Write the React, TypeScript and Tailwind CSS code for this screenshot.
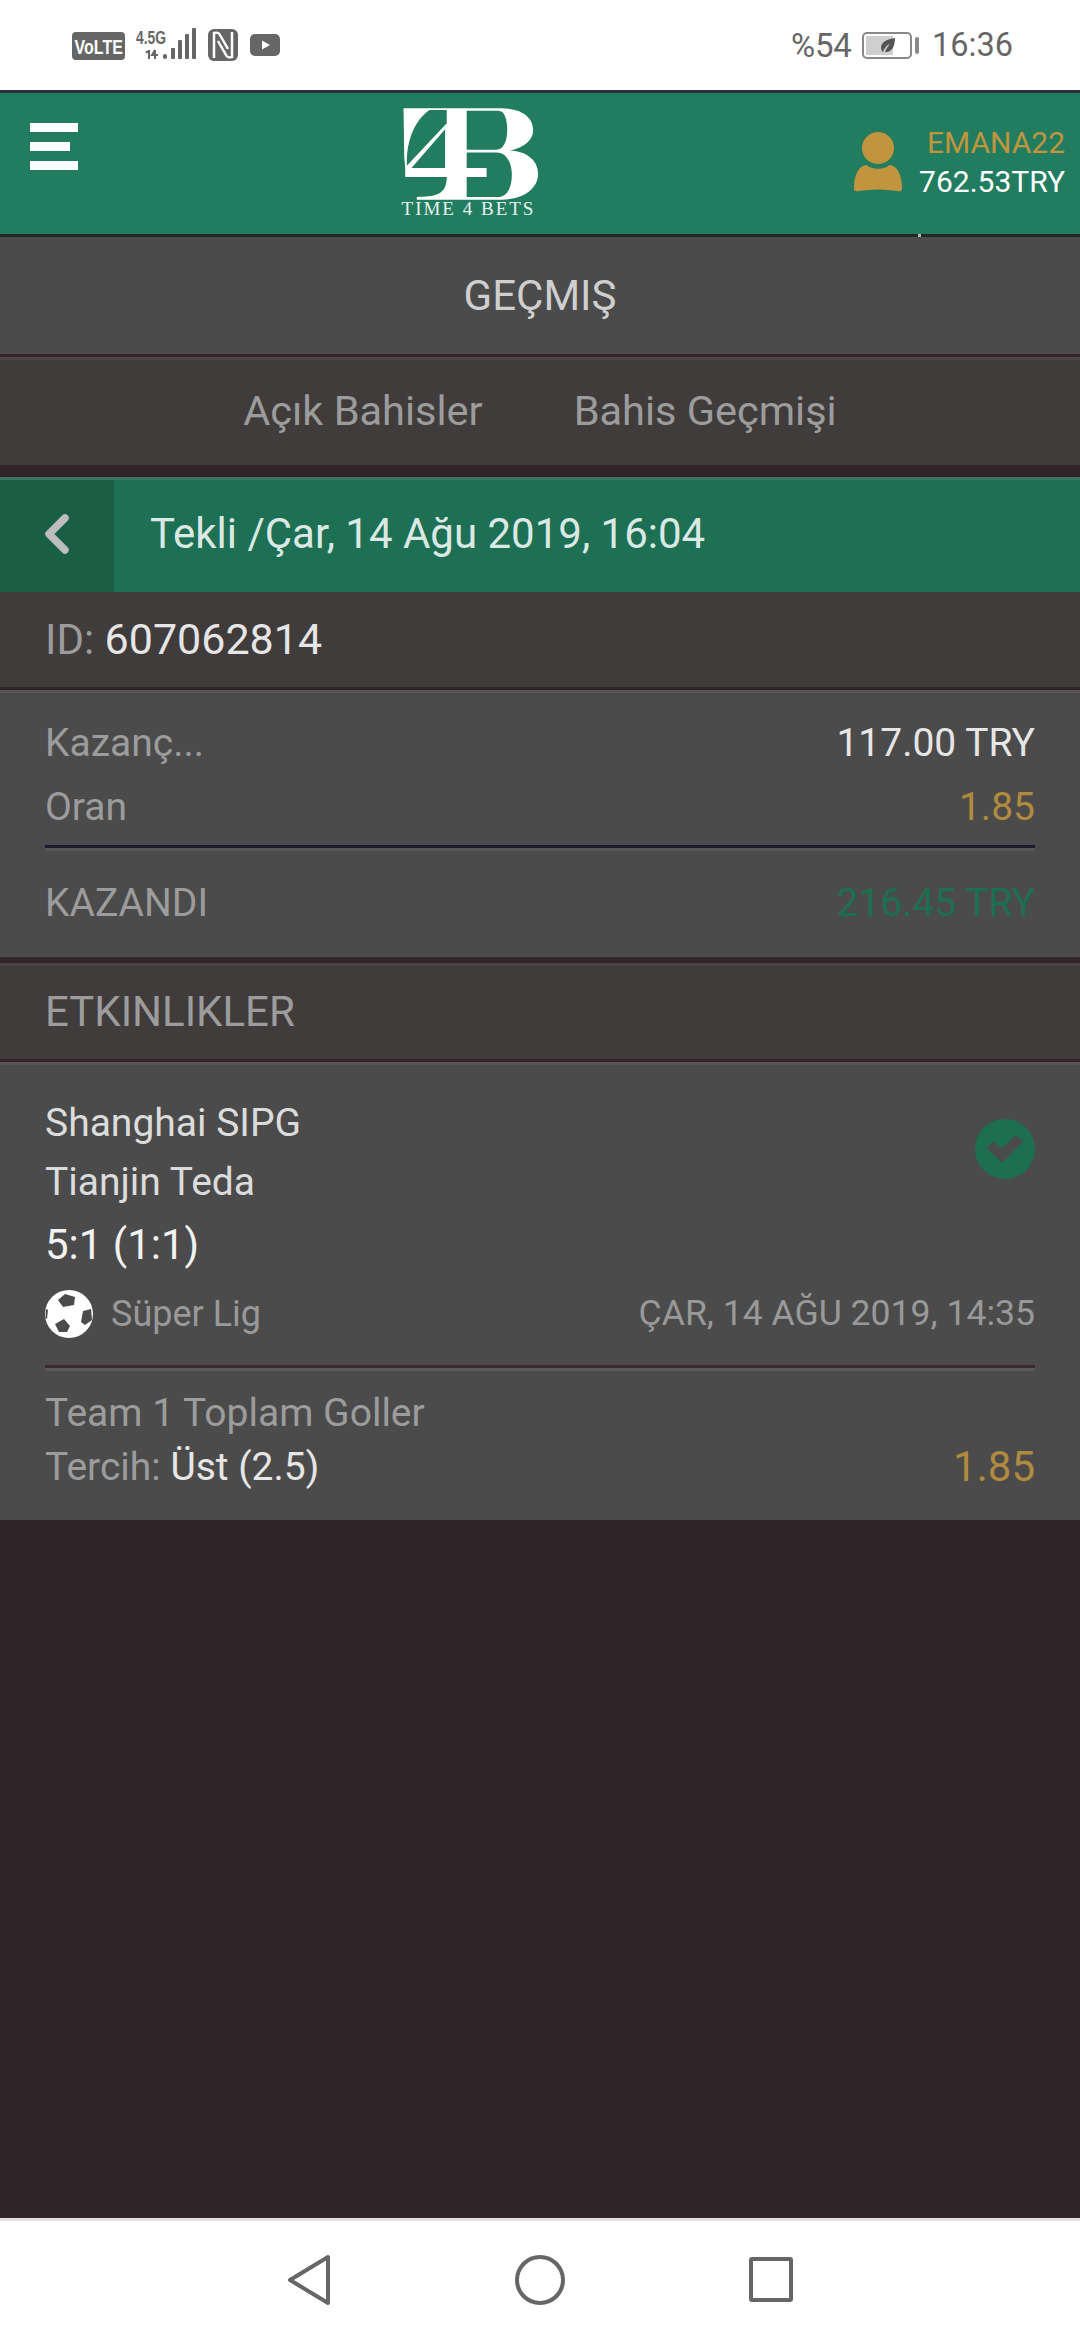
import { ChevronLeft } from "lucide-react";

function StatusBar() {
  return (
    <div className="h-[90px] bg-white flex items-center text-[#666666]">
      <div className="ml-[72px] mt-[2px] w-[53px] h-[28px] rounded-[4px] bg-[#666666] flex items-center justify-center">
        <span className="shrink-0 scale-x-[0.76] text-[21px] leading-none font-bold text-white font-['Liberation_Sans',sans-serif]">VoLTE</span>
      </div>
      <svg className="ml-[11px]" width="60" height="34" viewBox="0 0 60 34">
        <text x="0" y="16" fontSize="19" fontWeight="700" fill="#666666" fontFamily="Liberation Sans, sans-serif" textLength="30" lengthAdjust="spacingAndGlyphs">4.5G</text>
        <path d="M13 22v9M12 23l-2 2M19 22v9M19 22l-3 5h6" stroke="#666666" strokeWidth="2" fill="none" />
        <rect x="27" y="26" width="4" height="5" rx="2" fill="#666666" />
        <rect x="35" y="20" width="4" height="11" rx="1" fill="#666666" />
        <rect x="42" y="12" width="4" height="19" rx="1" fill="#666666" />
        <rect x="49" y="6" width="4" height="25" rx="1" fill="#666666" />
        <rect x="56" y="0" width="4" height="31" rx="1" fill="#666666" />
      </svg>
      <svg className="ml-[12px]" width="30" height="32" viewBox="0 0 30 32">
        <rect x="0" y="0" width="30" height="32" rx="6" fill="#666666" />
        <path d="M6 29V4c4-1 5 0 6 2l8 14" stroke="#ffffff" strokeWidth="2.5" fill="none" />
        <path d="M24 3v25c-4 1-5 0-6-2l-8-14" stroke="#ffffff" strokeWidth="2.5" fill="none" />
      </svg>
      <svg className="ml-[12px]" width="30" height="22" viewBox="0 0 30 22">
        <rect width="30" height="22" rx="5" fill="#666666" />
        <path d="M12 6.5l8 4.5-8 4.5z" fill="#ffffff" />
      </svg>
      <span className="ml-auto text-[33px] leading-none font-['Roboto',sans-serif] w-[61px] tracking-[-0.3px] whitespace-nowrap">%54</span>
      <div className="ml-[10px] w-[50px] h-[27px] border-2 border-[#888888] rounded-[5px] p-[2px] relative">
        <div className="h-full w-[27px] bg-[#cfcfcf]" />
        <svg className="absolute left-[16px] top-[3px]" width="16" height="17" viewBox="0 0 16 17">
          <path d="M15 1C7 2 1 5 1 11c0 2 1 3 2 4 1-4 4-7 7-8-2 2-4 5-5 8 6 1 10-5 10-14z" fill="#555555" />
        </svg>
      </div>
      <div className="ml-[3px] w-[4px] h-[17px] rounded-[2px] bg-[#888888]" />
      <span className="ml-[13px] mr-[67px] text-[32.5px] leading-none font-['Roboto',sans-serif]">16:36</span>
    </div>
  );
}

function Logo() {
  return (
    <div className="ml-[312px] flex flex-col items-center">
      <svg width="160" height="103" viewBox="0 0 480 310">
        <path
          d="M40 25H335C400 25 430 55 430 90C430 125 395 145 360 152C415 155 445 185 445 222C445 270 395 300 335 300H80V292C130 290 170 290 170 232H45V205L42 170Z"
          fill="#ffffff"
        />
        <path d="M118 30H170V70L50 198C47 120 75 60 118 30Z" fill="#227d60" />
        <path d="M165 88V205H64Z" fill="#227d60" />
        <path d="M230 32H325C345 32 352 60 352 90C352 125 340 148 320 150H230Z" fill="#227d60" />
        <path d="M230 158H320C350 158 366 190 366 225C366 265 350 292 325 292H230V232H290V205H230Z" fill="#227d60" />
      </svg>
      <span className="mt-[-3px] mr-[3px] text-[19px] leading-[18px] text-[#e8f1ee] tracking-[2px] font-['Liberation_Serif',serif] whitespace-nowrap">
        TIME 4 BETS
      </span>
    </div>
  );
}

function Header() {
  return (
    <div className="h-[147px] bg-[#227d60] border-t-[3px] border-b-[3px] border-t-[#2b3238] border-b-[#262626] flex relative">
      <div className="ml-[30px] mt-[30px] w-[48px] flex flex-col gap-[10px]">
        <div className="h-[9px] w-[48px] bg-white" />
        <div className="h-[9px] w-[40px] bg-white" />
        <div className="h-[9px] w-[48px] bg-white" />
      </div>
      <div className="mt-[7px]">
        <Logo />
      </div>
      <div className="ml-auto mr-[15px] mt-[30px] flex items-start">
        <svg className="mt-[9px]" width="48" height="62" viewBox="0 0 48 62">
          <circle cx="24" cy="16" r="16" fill="#c1953d" />
          <path d="M0 56C0 43 5 33 13 33C17 38 31 38 35 33C43 33 48 43 48 56Q48 60 44 59Q24 56 4 59Q0 60 0 56Z" fill="#c1953d" />
        </svg>
        <div className="ml-[17px] flex flex-col items-end font-['Roboto',sans-serif] text-[30px] leading-[39px]">
          <span className="text-[#c1953d]">EMANA22</span>
          <span className="text-white">762.53TRY</span>
        </div>
      </div>
      <div className="absolute left-[918px] top-[141px] w-[3px] h-[3px] bg-[#b5b5b5]" />
    </div>
  );
}

function Row({ label, value, valueColor }: { label: string; value: string; valueColor: string }) {
  return (
    <div className="flex items-center justify-between text-[39px] leading-[42px]">
      <span className="text-[#9c9c9c]">{label}</span>
      <span className={valueColor}>{value}</span>
    </div>
  );
}

function Ball() {
  return (
    <svg width="48" height="48" viewBox="10 10 48 48">
      <circle cx="34" cy="34" r="24" fill="#ffffff" />
      <path d="M23 20L30 14L40 17L39 25L28 27Z" fill="#4b4b4b" />
      <path d="M48 31L56 29L57 40L50 45L46 42Z" fill="#4b4b4b" />
      <path d="M20 44L29 39L35 46L32 52L24 52Z" fill="#4b4b4b" />
      <path d="M11 29L13 30L12 39L10.5 38Z" fill="#4b4b4b" />
    </svg>
  );
}

function CheckBadge() {
  return (
    <svg width="60" height="60" viewBox="0 0 60 60">
      <circle cx="30" cy="30" r="30" fill="#1d6f51" />
      <path d="M11.7 29.3L18.3 22.7L27.3 29.3L40.7 16L48.3 22.7L27.3 43.7Z" fill="#4b4b4b" />
    </svg>
  );
}

function NavBar() {
  return (
    <div className="h-[122px] bg-white border-t-[3px] border-[#e0e0e0] flex items-center justify-center">
      <div className="mt-[-2px] flex items-center gap-[184px]">
        <svg width="44" height="52" viewBox="0 0 44 52">
          <path d="M41 3V49L3 26Z" fill="none" stroke="#666666" strokeWidth="4" strokeLinejoin="round" />
        </svg>
        <svg width="50" height="50" viewBox="0 0 50 50">
          <circle cx="25" cy="25" r="23" fill="none" stroke="#666666" strokeWidth="4" />
        </svg>
        <div className="w-[44px] h-[45px] border-[4px] border-[#666666] rounded-[3px]" />
      </div>
    </div>
  );
}

export default function App() {
  return (
    <div className="w-[1080px] h-[2340px] bg-[#30262a] flex flex-col font-['Roboto',sans-serif] overflow-hidden">
      <StatusBar />
      <Header />

      <div className="h-[117px] bg-[#4b4b4b] flex items-center justify-center text-[42px] text-[#cfcfcf]">GEÇMIŞ</div>
      <div className="h-[3px] bg-[#30262a]" />
      <div className="h-[108px] bg-[#403c3c] border-t-[3px] border-[#4a4646] pb-[2px] flex items-center justify-center gap-[91px] text-[41.5px] text-[#9c9c9c]">
        <span>Açık Bahisler</span>
        <span>Bahis Geçmişi</span>
      </div>

      <div className="mt-[12px] h-[115px] bg-[#1d7053] border-t-[3px] border-[#3a7562] flex items-stretch">
        <div className="w-[114px] bg-[#1a5f45] flex items-center justify-center text-[#bdbdbd]">
          <ChevronLeft size={64} strokeWidth={2.8} className="mb-[4px]" />
        </div>
        <div className="ml-[36px] pb-[5px] flex items-center text-[42px] text-[#dce8e3]">Tekli /Çar, 14 Ağu 2019, 16:04</div>
      </div>

      <div className="h-[95px] bg-[#403c3c] px-[45px] pb-[1px] flex items-center text-[42px] text-[#9c9c9c]">
        ID:&nbsp;<span className="text-[43px] text-[#e6e6e6]">607062814</span>
      </div>
      <div className="h-[3px] bg-[#30262a]" />

      <div className="h-[267px] bg-[#4b4b4b] border-t-[3px] border-[#555555] px-[45px] pt-[29px]">
        <Row label="Kazanç..." value="117.00 TRY" valueColor="text-[#e6e6e6]" />
        <div className="mt-[22px]">
          <Row label="Oran" value="1.85" valueColor="text-[#b08a3e]" />
        </div>
        <div className="mt-[17px] h-[3px] bg-[#1c1c2a]" />
        <div className="h-[3px] bg-[#55565a]" />
        <div className="mt-[31px]">
          <Row label="KAZANDI" value="216.45 TRY" valueColor="text-[#1d6f51]" />
        </div>
      </div>

      <div className="h-[6px] bg-[#30262a]" />
      <div className="h-[96px] bg-[#403c3c] border-t-[3px] border-[#4a4646] pb-[2px] px-[45px] flex items-center text-[42px] text-[#9c9c9c]">
        ETKINLIKLER
      </div>
      <div className="h-[3px] bg-[#30262a]" />

      <div className="h-[458px] bg-[#4b4b4b] border-t-[3px] border-[#555555] px-[45px] pt-[37px]">
        <div className="flex justify-between items-start">
          <div className="flex flex-col">
            <span className="text-[39px] leading-[42px] text-[#dcdcdc]">Shanghai SIPG</span>
            <span className="mt-[17px] text-[39px] leading-[42px] text-[#dcdcdc]">Tianjin Teda</span>
            <span className="mt-[19px] text-[42px] leading-[46px] text-[#f2f2f2]">5:1 (1:1)</span>
          </div>
          <div className="mt-[17px]">
            <CheckBadge />
          </div>
        </div>
        <div className="mt-[19px] flex items-center justify-between text-[36px] text-[#999999]">
          <div className="flex items-center gap-[18px]">
            <Ball />
            <span>Süper Lig</span>
          </div>
          <span className="text-[35.6px]">ÇAR, 14 AĞU 2019, 14:35</span>
        </div>
        <div className="mt-[24px] h-[3px] bg-[#3a2c2c]" />
        <div className="h-[3px] bg-[#5a5a5c]" />
        <div className="mt-[21px] text-[39px] leading-[42px] text-[#9c9c9c]">Team 1 Toplam Goller</div>
        <div className="mt-[12px] flex items-center justify-between text-[39px] leading-[42px]">
          <span className="text-[#9c9c9c]">
            Tercih: <span className="text-[#e6e6e6]">Üst (2.5)</span>
          </span>
          <span className="text-[42px] text-[#b08a3e]">1.85</span>
        </div>
      </div>

      <div className="flex-1" />
      <NavBar />
    </div>
  );
}
